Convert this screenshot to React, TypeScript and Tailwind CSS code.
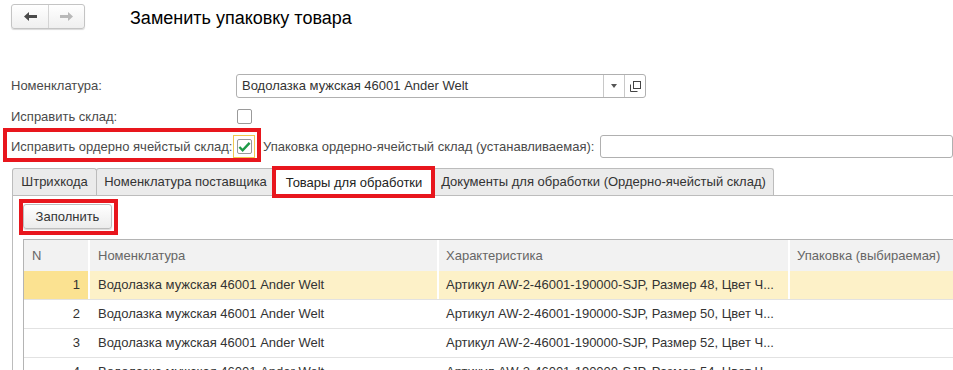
import React from "react";

const rows = [
  { n: 1, name: "Водолазка мужская 46001 Ander Welt", ch: "Артикул AW-2-46001-190000-SJP, Размер 48, Цвет Ч...", current: true },
  { n: 2, name: "Водолазка мужская 46001 Ander Welt", ch: "Артикул AW-2-46001-190000-SJP, Размер 50, Цвет Ч..." },
  { n: 3, name: "Водолазка мужская 46001 Ander Welt", ch: "Артикул AW-2-46001-190000-SJP, Размер 52, Цвет Ч..." },
  { n: 4, name: "Водолазка мужская 46001 Ander Welt", ch: "Артикул AW-2-46001-190000-SJP, Размер 54, Цвет Ч..." },
];

function Arrow({ dir, color }: { dir: "left" | "right"; color: string }) {
  return (
    <svg width="13" height="9" viewBox="0 0 13 9" className={dir === "right" ? "rotate-180" : ""}>
      <path d="M0 4.5 L5 0 L5 3 L13 3 L13 6 L5 6 L5 9 Z" fill={color} />
    </svg>
  );
}

function Checkbox({ checked }: { checked?: boolean }) {
  return (
    <span className="flex h-[15px] w-[15px] items-center justify-center rounded-[2px] border border-[#9a9a9a] bg-white">
      {checked && (
        <svg width="14" height="12" viewBox="0 0 14 12">
          <path d="M1.5 6 L5 9.5 L12.5 1.5" fill="none" stroke="#1e9a47" strokeWidth="2.6" />
        </svg>
      )}
    </span>
  );
}

export default function App() {
  return (
    <div className="relative h-[370px] w-[953px] overflow-hidden bg-white font-['Arial','Liberation_Sans',sans-serif] text-[13px] text-[#4a4a4a]">
      {/* header */}
      <div className="flex h-[74px] items-start pl-[11px] pt-[4px]">
        <div className="flex h-[25px] w-[74px] rounded-[3px] border border-[#c4c4c4] bg-gradient-to-b from-white to-[#efefef] shadow-[0_1px_1px_rgba(0,0,0,0.15)]">
          <span className="flex w-[37px] items-center justify-center border-r border-[#d4d4d4]">
            <Arrow dir="left" color="#4a4a4a" />
          </span>
          <span className="flex flex-1 items-center justify-center">
            <Arrow dir="right" color="#b8b8b8" />
          </span>
        </div>
        <div className="ml-[45px] text-[18px] leading-[28px] text-black">Заменить упаковку товара</div>
      </div>

      {/* form */}
      <div className="flex h-[24px] items-center pl-[11px]">
        <span className="w-[225px]">Номенклатура:</span>
        <div className="flex h-[24px] w-[410px] items-stretch rounded-[3px] border border-[#b0b0b0]">
          <span className="flex flex-1 items-center pl-[5px] text-[#333]">Водолазка мужская 46001 Ander Welt</span>
          <span className="flex w-[21px] items-center justify-center border-l border-[#c8c8c8]">
            <svg width="6" height="4" viewBox="0 0 6 4"><path d="M0 0 L6 0 L3 4 Z" fill="#555" /></svg>
          </span>
          <span className="flex w-[21px] items-center justify-center border-l border-[#c8c8c8]">
            <svg width="11" height="11" viewBox="0 0 11 11" fill="none" stroke="#444" strokeWidth="1">
              <rect x="3.5" y="0.5" width="7" height="7" />
              <path d="M0.5 3.5 V10.5 H7.5" />
            </svg>
          </span>
        </div>
      </div>

      <div className="mt-[11px] flex h-[15px] items-center pl-[11px]">
        <span className="w-[226px]">Исправить склад:</span>
        <Checkbox />
      </div>

      <div className="mt-[11px] flex h-[23px] items-center pl-[11px]">
        <span className="w-[222px]">Исправить ордерно ячейстый склад:</span>
        <span className="flex h-[23px] w-[22px] items-center justify-center border border-[#f0c850]">
          <Checkbox checked />
        </span>
        <span className="ml-[8px]">Упаковка ордерно-ячейстый склад (устанавливаемая):</span>
        <div className="ml-[6px] h-[23px] flex-1 rounded-[3px] border border-[#b0b0b0]" />
      </div>

      {/* tabs */}
      <div className="ml-[12px] mt-[10px] flex h-[28px] items-end border-b border-[#bcbcbc] text-[#333]">
        <span className="flex h-[27px] w-[85px] items-center justify-center rounded-t-[3px] border border-b-0 border-[#bcbcbc] bg-[#ebebeb]">Штрихкода</span>
        <span className="-ml-px flex h-[27px] w-[179px] items-center justify-center rounded-t-[3px] border border-b-0 border-[#bcbcbc] bg-[#ebebeb]">Номенклатура поставщика</span>
        <span className="relative -mb-px flex h-[28px] w-[158px] items-center justify-center rounded-t-[3px] border border-b-0 border-[#bcbcbc] bg-white text-[#222]">Товары для обработки</span>
        <span className="flex h-[27px] w-[341px] items-center justify-center rounded-t-[3px] border border-b-0 border-[#bcbcbc] bg-[#ebebeb]">Документы для обработки (Ордерно-ячейстый склад)</span>
      </div>

      {/* panel */}
      <div className="ml-[12px] h-[200px] border-l border-[#bcbcbc] pl-[10px] pt-[8px]">
        <button className="flex h-[25px] w-[89px] items-center justify-center rounded-[3px] border border-[#bdbdbd] bg-gradient-to-b from-white to-[#ececec] text-[#333] shadow-[0_1px_1px_rgba(0,0,0,0.15)]">
          Заполнить
        </button>

        <div className="mt-[10px] w-[940px] border-l border-t border-[#b4b4b4]">
          <div className="grid h-[31px] grid-cols-[66px_349px_351px_1fr] bg-[#f2f2f2] text-[#666]">
            <span className="flex items-center border-r-2 border-white pl-[8px]">N</span>
            <span className="flex items-center border-r-2 border-white pl-[8px]">Номенклатура</span>
            <span className="flex items-center border-r-2 border-white pl-[7px]">Характеристика</span>
            <span className="flex items-center pl-[7px]">Упаковка (выбираемая)</span>
          </div>
          {rows.map((r) => (
            <div
              key={r.n}
              className={
                "grid h-[29px] grid-cols-[66px_349px_351px_1fr] border-b border-[#e2e2e2] text-[#333] " +
                (r.current ? "bg-[#fdf1c8]" : "bg-white")
              }
            >
              <span
                className={
                  "flex items-center justify-end border-r-2 border-white pr-[8px] " + (r.current ? "bg-[#fbe291]" : "")
                }
              >
                {r.n}
              </span>
              <span className="flex items-center border-r-2 border-white pl-[8px]">{r.name}</span>
              <span className="flex items-center border-r-2 border-white pl-[7px]">{r.ch}</span>
              <span />
            </div>
          ))}
        </div>
      </div>

      {/* red annotation frames */}
      <div className="pointer-events-none absolute left-[3px] top-[128px] h-[34px] w-[258px] border-[4px] border-[#e8161d]" />
      <div className="pointer-events-none absolute left-[272px] top-[166px] h-[32px] w-[163px] border-[4px] border-[#e8161d]" />
      <div className="pointer-events-none absolute left-[19px] top-[199px] h-[36px] w-[99px] border-[4px] border-[#e8161d]" />
    </div>
  );
}
